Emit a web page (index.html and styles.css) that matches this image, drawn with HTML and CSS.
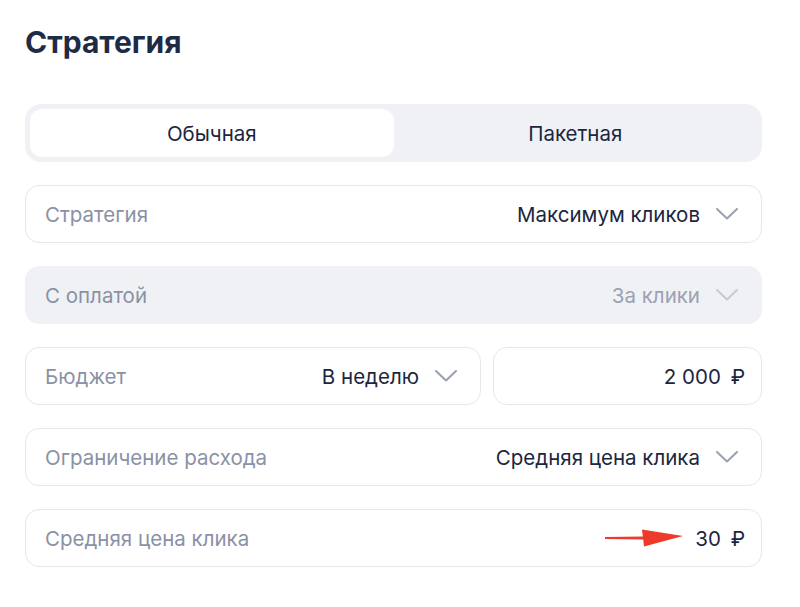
FILE: index.html
```html
<!DOCTYPE html>
<html lang="ru">

<head>
    <meta charset="UTF-8">
    <meta name="viewport" content="width=device-width, initial-scale=1.0">
    <title>Стратегия</title>
    <link rel="stylesheet" href="styles.css">
</head>

<body>
    <div class="page">
        <h1>Стратегия</h1>

        <div class="tabs">
            <div class="tab active">Обычная</div>
            <div class="tab">Пакетная</div>
        </div>

        <div class="field">
            <span class="label">Стратегия</span>
            <span class="value">Максимум кликов</span>
            <svg class="chevron" width="22" height="12" viewBox="0 0 22 12"><path d="M1 1 L11 10.5 L21 1" /></svg>
        </div>

        <div class="field disabled">
            <span class="label">С оплатой</span>
            <span class="value">За клики</span>
            <svg class="chevron" width="22" height="12" viewBox="0 0 22 12"><path d="M1 1 L11 10.5 L21 1" /></svg>
        </div>

        <div class="row">
            <div class="field">
                <span class="label">Бюджет</span>
                <span class="value">В неделю</span>
                <svg class="chevron" width="22" height="12" viewBox="0 0 22 12"><path d="M1 1 L11 10.5 L21 1" /></svg>
            </div>
            <div class="field amount">
                <span class="value">2 000 <span class="rub">₽</span></span>
            </div>
        </div>

        <div class="field">
            <span class="label">Ограничение расхода</span>
            <span class="value">Средняя цена клика</span>
            <svg class="chevron" width="22" height="12" viewBox="0 0 22 12"><path d="M1 1 L11 10.5 L21 1" /></svg>
        </div>

        <div class="field amount">
            <span class="label">Средняя цена клика</span>
            <svg class="arrow" width="80" height="20" viewBox="0 0 80 20">
                <path d="M1 9 L40 8.5 L40 11.5 L1 11 Z" />
                <path d="M38 1.5 L79 8 L40 18.5 Z" />
            </svg>
            <span class="value">30 <span class="rub">₽</span></span>
        </div>
    </div>
</body>

</html>
```

FILE: styles.css
```css
body {
    margin: 0;
    background: #fff;
    font-family: Inter, "Noto Sans", sans-serif;
    color: #1c2640;
}

.page {
    width: 737px;
    padding: 22px 0 0 25px;
    display: flex;
    flex-direction: column;
    gap: 23px;
}

h1 {
    margin: 0 0 19px;
    font-size: 30px;
    font-weight: 700;
    line-height: 40px;
    color: #1f2a44;
}

.tabs {
    display: grid;
    grid-template-columns: 1fr 1fr;
    padding: 5px;
    height: 48px;
    background: #eff1f5;
    border-radius: 16px;
}

.tab {
    display: flex;
    justify-content: center;
    align-items: center;
    font-size: 20.5px;
    border-radius: 12px;
}

.tab.active {
    background: #fff;
}

.row {
    display: grid;
    grid-template-columns: 456px 1fr;
    gap: 12px;
}

.field {
    display: flex;
    align-items: center;
    height: 56px;
    padding: 0 23px 0 19px;
    border: 1px solid #e5e7ed;
    border-radius: 14px;
    font-size: 20.5px;
    background: #fff;
}

.field.amount {
    padding-right: 16px;
}

.label {
    color: #8b91a5;
    flex: 1;
}

.value {
    color: #1c2640;
    white-space: nowrap;
}

.rub {
    margin-left: 4px;
}

.chevron {
    margin-left: 16px;
    fill: none;
    stroke: #9aa0b1;
    stroke-width: 2;
    stroke-linecap: round;
    stroke-linejoin: round;
}

.disabled {
    background: #eff1f5;
    border-color: #eff1f5;
}

.disabled .value {
    color: #9ca1b1;
}

.disabled .chevron {
    stroke: #c6cad4;
}

.amount {
    justify-content: flex-end;
}

.arrow {
    margin-right: 11px;
    fill: #ee3a2b;
}
```
